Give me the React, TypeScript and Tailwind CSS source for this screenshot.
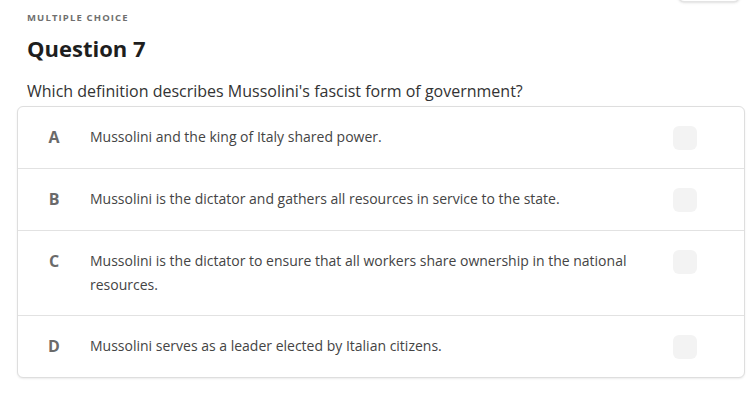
import React from 'react';

const options = [
  { letter: 'A', text: 'Mussolini and the king of Italy shared power.' },
  { letter: 'B', text: 'Mussolini is the dictator and gathers all resources in service to the state.' },
  {
    letter: 'C',
    text: 'Mussolini is the dictator to ensure that all workers share ownership in the national resources.',
  },
  { letter: 'D', text: 'Mussolini serves as a leader elected by Italian citizens.' },
];

export default function App() {
  return (
    <div className="w-[756px] h-[400px] bg-white overflow-hidden font-['Open_Sans',sans-serif]">
      {/* cut-off control at top right */}
      <div className="flex justify-end pr-[16px]">
        <div className="w-[62px] h-[30px] -mt-[28px] rounded-md border border-[#e4e4e4] shadow-sm bg-white" />
      </div>

      <div className="pl-[27px] pr-[11px]">
        <div className="pt-[9px] text-[9.5px] font-bold tracking-[0.12em] text-[#6f6f6f] leading-[14px]">
          MULTIPLE CHOICE
        </div>
        <h1 className="mt-[9px] text-[22px] font-bold text-[#1e1e1e] leading-[28px]">Question 7</h1>
        <p className="mt-[17px] text-[16px] text-[#333] leading-[24px]">
          Which definition describes Mussolini's fascist form of government?
        </p>

        {/* Answers */}
        <div className="-ml-[10px] mt-[3px] rounded-md border border-[#dedede] shadow-[0_1px_2px_rgba(0,0,0,0.08)] bg-white">
          {options.map((opt, i) => (
            <div
              key={opt.letter}
              className={`flex items-start py-[18px] ${i > 0 ? 'border-t border-[#e2e2e2]' : ''}`}
            >
              <div className="w-[72px] text-center text-[16px] font-bold text-[#6a6a6a] leading-[24px]">
                {opt.letter}
              </div>
              <div className="flex-1 text-[14px] text-[#444] leading-[24px] pr-[40px]">{opt.text}</div>
              <div className="w-[24px] h-[24px] mt-[1px] mr-[47px] rounded-md bg-[#f3f3f3]" />
            </div>
          ))}
        </div>
      </div>
    </div>
  );
}
